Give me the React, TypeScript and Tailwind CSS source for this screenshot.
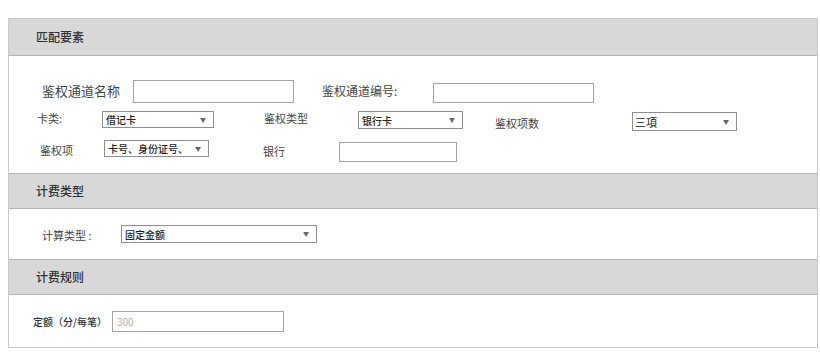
import React from 'react';

const font = { fontFamily: '"Noto Sans CJK SC", "Noto Sans", sans-serif' };

function SectionHeader({ title, first }: { title: string; first?: boolean }) {
  return (
    <div
      className={`flex items-center pl-[27px] bg-[#d8d8d8] border-b border-[#b4b4b4] ${first ? 'h-[37px]' : 'h-[36px] border-t'}`}
    >
      <span className="text-[12px] font-medium text-[#333]">{title}</span>
    </div>
  );
}

function Select({ value, w, h }: { value: string; w: string; h: string }) {
  return (
    <div className={`${w} ${h} flex items-center justify-between border border-[#8f8f8f] bg-white pl-[3px] pr-[7px]`}>
      <span className="text-[10px] font-medium text-[#222] leading-[13px] whitespace-nowrap">{value}</span>
      <span className="text-[6px] text-[#666] leading-[8px]">▼</span>
    </div>
  );
}

function Input({ w, h, placeholder }: { w: string; h: string; placeholder?: string }) {
  return (
    <div className={`${w} ${h} flex items-center border border-[#a3a3a3] bg-white pl-[4px]`}>
      {placeholder && <span className="text-[10px] text-[#b0b0b0] leading-[13px]">{placeholder}</span>}
    </div>
  );
}

export default function App() {
  return (
    <div className="w-[820px] h-[356px] bg-white pt-[18px] pl-[8px]" style={font}>
      <div className="w-[810px] border border-[#c9c9c9]">
        {/* 匹配要素 */}
        <SectionHeader title="匹配要素" first />
        <div className="h-[117px] flex flex-col">
          {/* row 1 */}
          <div className="flex items-center mt-[23px] pl-[33px] h-[24px]">
            <div className="w-[91px] text-[13px] text-[#444]">鉴权通道名称</div>
            <Input w="w-[161px]" h="h-[23px]" />
            <div className="ml-[28px] w-[111px] text-[12px] text-[#444]">鉴权通道编号:</div>
            <div className="mt-[4px]">
              <Input w="w-[161px]" h="h-[20px]" />
            </div>
          </div>
          {/* row 2 */}
          <div className="flex items-start mt-[8px] pl-[28px] h-[20px]">
            <div className="w-[65px] text-[11px] text-[#444] leading-[14px]">卡类:</div>
            <Select value="借记卡" w="w-[112px]" h="h-[17px]" />
            <div className="ml-[50px] w-[94px] text-[11px] text-[#444] leading-[15px]">鉴权类型</div>
            <Select value="银行卡" w="w-[105px]" h="h-[18px]" />
            <div className="ml-[32px] w-[137px] text-[11px] text-[#444] leading-[17px] mt-[4px]">鉴权项数</div>
            <div className="mt-[1px]">
              <div className="w-[105px] h-[19px] flex items-center justify-between border border-[#8f8f8f] bg-white pl-[2px] pr-[7px]">
                <span className="text-[11px] text-[#222] leading-[14px]">三項</span>
                <span className="text-[6px] text-[#666] leading-[8px]">▼</span>
              </div>
            </div>
          </div>
          {/* row 3 */}
          <div className="flex items-start mt-[9px] pl-[31px] h-[22px]">
            <div className="w-[64px] text-[11px] text-[#444] leading-[20px]">鉴权项</div>
            <Select value="卡号、身份证号、" w="w-[105px]" h="h-[17px]" />
            <div className="ml-[54px] w-[76px] text-[11px] text-[#444] leading-[22px]">银行</div>
            <div className="mt-[2px]">
              <Input w="w-[118px]" h="h-[20px]" />
            </div>
          </div>
        </div>

        {/* 计费类型 */}
        <SectionHeader title="计费类型" />
        <div className="h-[50px] flex items-center pl-[33px]">
          <div className="w-[79px] text-[11px] text-[#444] mt-[3px]">计算类型 :</div>
          <Select value="固定金额" w="w-[196px]" h="h-[18px]" />
        </div>

        {/* 计费规则 */}
        <SectionHeader title="计费规则" />
        <div className="h-[52px] flex items-center pl-[24px]">
          <div className="w-[79px] text-[10px] font-medium text-[#333]">定额（分/每笔）</div>
          <Input w="w-[172px]" h="h-[21px]" placeholder="300" />
        </div>
      </div>
    </div>
  );
}
